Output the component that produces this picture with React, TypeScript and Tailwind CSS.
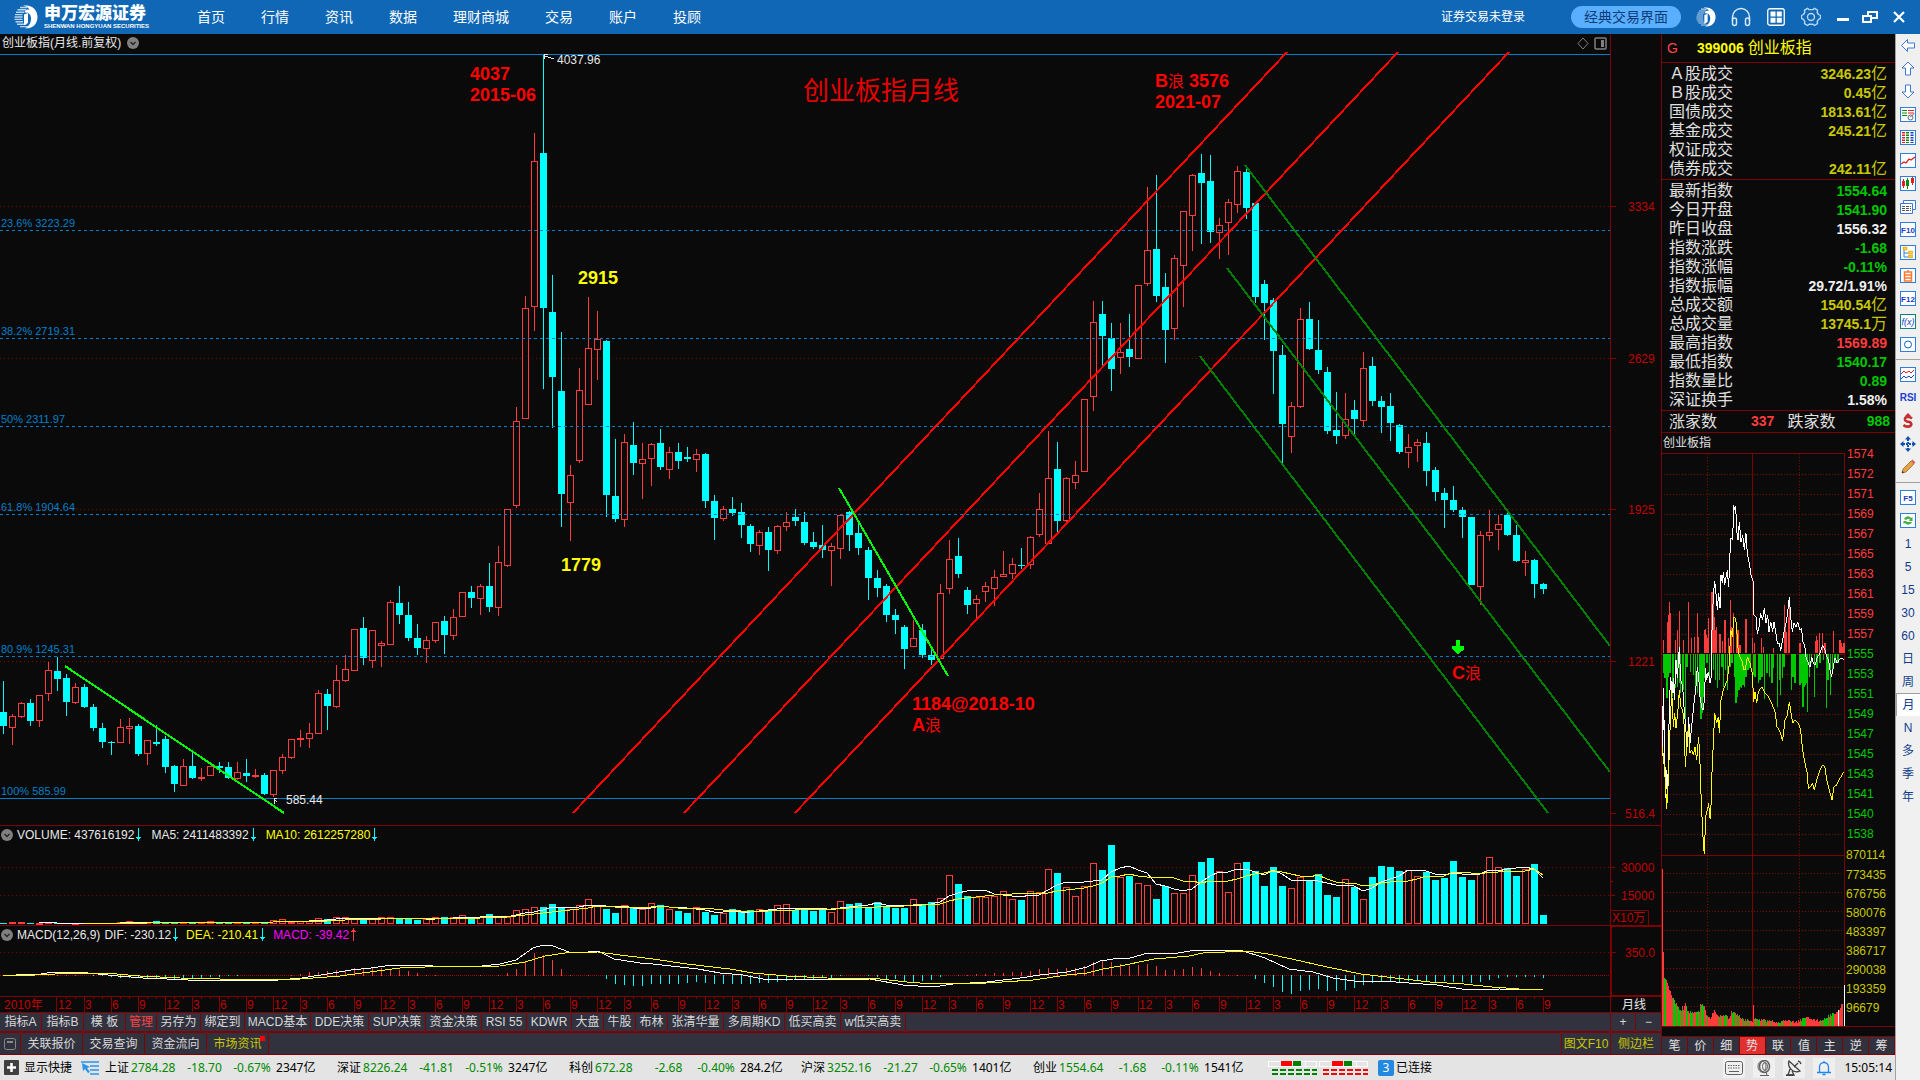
import React from "react";

const BG = "#0a0a0a";
const UP = "#ff3c3c";
const DOWN = "#00ffff";
const GRID = "#800000";
const FIB = "#0080c8";

type Kind = "R" | "C";
type Candle = [Kind, number, number, number, number];

/* kind, high, body top, body bottom, low; one entry per month from June 2010 */
const candles: Candle[] = [
  ["C", 681, 712, 726, 734], ["R", 714, 716, 728, 745], ["R", 702, 703, 717, 718], ["C", 699, 703, 721, 726],
  ["R", 695, 695, 721, 727], ["R", 662, 670, 694, 701], ["C", 657, 671, 679, 691], ["C", 674, 678, 702, 716],
  ["R", 683, 687, 703, 704], ["C", 684, 687, 707, 708], ["C", 704, 707, 728, 731], ["C", 723, 728, 742, 748],
  ["C", 741, 742, 743, 755], ["R", 719, 727, 743, 743], ["R", 718, 726, 729, 744], ["C", 724, 726, 754, 756],
  ["R", 740, 740, 754, 765], ["C", 725, 742, 744, 746], ["C", 736, 739, 767, 773], ["C", 765, 766, 784, 792],
  ["R", 759, 766, 786, 786], ["C", 752, 766, 778, 779], ["R", 768, 777, 779, 781], ["R", 766, 766, 776, 776],
  ["C", 762, 766, 768, 773], ["C", 762, 767, 778, 779], ["R", 762, 772, 779, 780], ["C", 759, 773, 776, 782],
  ["R", 769, 775, 777, 778], ["C", 773, 775, 794, 795], ["R", 770, 770, 795, 797], ["R", 754, 757, 771, 774],
  ["R", 739, 739, 758, 759], ["R", 730, 738, 740, 747], ["R", 723, 733, 739, 748], ["R", 690, 693, 734, 734],
  ["C", 689, 694, 706, 730], ["R", 665, 680, 707, 708], ["R", 655, 669, 681, 682], ["R", 629, 629, 671, 671],
  ["C", 617, 628, 658, 665], ["R", 630, 630, 661, 668], ["R", 641, 643, 646, 667], ["R", 600, 602, 645, 645],
  ["C", 586, 603, 615, 624], ["C", 602, 615, 638, 641], ["C", 624, 638, 648, 655], ["R", 636, 640, 649, 663],
  ["R", 622, 622, 641, 643], ["C", 616, 621, 635, 654], ["R", 609, 617, 636, 640], ["R", 592, 592, 617, 617],
  ["C", 586, 592, 598, 608], ["R", 584, 586, 599, 615], ["C", 563, 586, 607, 612], ["R", 546, 562, 608, 616],
  ["R", 509, 509, 566, 567], ["R", 407, 421, 506, 508], ["R", 296, 308, 419, 419], ["R", 133, 161, 307, 331],
  ["C", 54, 153, 308, 389], ["C", 275, 312, 377, 428], ["C", 332, 391, 494, 527], ["R", 465, 475, 503, 541],
  ["R", 368, 390, 461, 463], ["R", 297, 348, 405, 405], ["R", 311, 339, 350, 380], ["C", 340, 341, 495, 517],
  ["C", 439, 496, 519, 522], ["R", 434, 442, 520, 527], ["C", 422, 445, 463, 475], ["R", 443, 459, 464, 499],
  ["R", 443, 444, 459, 486], ["C", 429, 443, 467, 470], ["R", 447, 452, 470, 479], ["C", 443, 452, 461, 469],
  ["C", 447, 457, 459, 462], ["R", 449, 454, 460, 472], ["C", 453, 454, 501, 508], ["C", 495, 501, 518, 540],
  ["R", 506, 509, 519, 521], ["C", 497, 509, 513, 516], ["C", 503, 512, 525, 538], ["C", 524, 526, 544, 552],
  ["R", 530, 532, 546, 555], ["C", 527, 532, 550, 571], ["R", 525, 526, 551, 554], ["R", 512, 522, 527, 531],
  ["C", 509, 517, 521, 526], ["C", 512, 522, 543, 545], ["C", 532, 542, 547, 549], ["C", 525, 545, 550, 558],
  ["R", 543, 546, 551, 586], ["R", 515, 515, 549, 559], ["C", 511, 512, 535, 551], ["C", 524, 533, 548, 555],
  ["C", 547, 550, 578, 600], ["C", 570, 578, 588, 597], ["C", 584, 586, 615, 622], ["C", 609, 615, 620, 634],
  ["C", 625, 627, 649, 669], ["R", 620, 638, 647, 647], ["C", 624, 630, 655, 658], ["C", 647, 655, 660, 665],
  ["R", 584, 593, 659, 659], ["R", 540, 559, 589, 594], ["C", 538, 556, 574, 578], ["C", 587, 590, 605, 614],
  ["R", 595, 599, 604, 618], ["R", 582, 586, 592, 602], ["R", 570, 577, 589, 606], ["R", 551, 574, 577, 577],
  ["R", 558, 564, 574, 579], ["C", 548, 565, 566, 569], ["R", 536, 537, 565, 569], ["R", 493, 509, 535, 537],
  ["R", 431, 478, 544, 544], ["C", 442, 469, 521, 532], ["R", 477, 478, 521, 523], ["R", 461, 475, 483, 489],
  ["R", 399, 399, 472, 472], ["R", 301, 322, 397, 411], ["C", 301, 314, 336, 366], ["C", 323, 338, 369, 391],
  ["R", 323, 352, 358, 374], ["C", 314, 349, 357, 367], ["R", 285, 285, 359, 359], ["R", 187, 250, 284, 286],
  ["C", 175, 249, 296, 302], ["C", 273, 287, 330, 363], ["R", 255, 258, 329, 340], ["R", 211, 211, 266, 307],
  ["R", 174, 175, 216, 251], ["C", 154, 173, 183, 244], ["C", 155, 181, 232, 243], ["R", 218, 225, 233, 259],
  ["R", 199, 202, 223, 255], ["R", 166, 171, 205, 213], ["C", 168, 172, 208, 219], ["C", 202, 203, 297, 303],
  ["C", 280, 284, 303, 340], ["C", 298, 300, 351, 394], ["C", 345, 355, 424, 463], ["R", 402, 406, 437, 453],
  ["R", 308, 319, 407, 408], ["C", 302, 319, 349, 350], ["C", 320, 350, 370, 374], ["C", 367, 372, 431, 434],
  ["C", 392, 430, 436, 444], ["R", 393, 419, 436, 439], ["C", 400, 410, 419, 434], ["R", 352, 368, 421, 426],
  ["C", 357, 366, 401, 406], ["C", 396, 401, 407, 433], ["C", 393, 406, 423, 441], ["C", 424, 425, 452, 454],
  ["R", 434, 447, 453, 468], ["R", 439, 442, 446, 462], ["C", 432, 443, 471, 486], ["C", 467, 470, 492, 501],
  ["C", 488, 493, 500, 528], ["C", 486, 500, 510, 512], ["C", 507, 510, 517, 538], ["C", 517, 517, 585, 585],
  ["R", 531, 535, 587, 605], ["R", 510, 532, 536, 541], ["R", 515, 524, 530, 550], ["C", 513, 515, 535, 536],
  ["C", 525, 535, 561, 562], ["R", 551, 560, 563, 576], ["C", 559, 560, 584, 598], ["C", 583, 584, 589, 594],
];

const volumes = [
  1, 2, 2, 1, 1, 2, 1, 1, 1, 1, 1, 1, 1, 2, 3, 2, 2, 3, 2, 2, 2, 2, 2, 3, 2, 2, 2, 2, 2, 2, 4, 5, 2, 3, 3, 6, 5, 7, 7, 6,
  6, 5, 7, 7, 5, 6, 4, 5, 7, 7, 7, 9, 6, 7, 10, 7, 7, 14, 15, 17, 17, 20, 16, 15, 19, 25, 18, 15, 11, 19, 16, 15, 21, 19,
  15, 13, 11, 17, 12, 9, 11, 15, 12, 14, 15, 13, 19, 20, 14, 15, 13, 16, 12, 23, 20, 21, 17, 22, 17, 16, 16, 25, 20, 22,
  26, 49, 40, 28, 27, 27, 28, 33, 25, 24, 33, 32, 55, 51, 37, 28, 38, 61, 54, 79, 47, 48, 41, 39, 25, 38, 31, 31, 49, 62,
  66, 53, 32, 61, 62, 53, 38, 57, 38, 36, 47, 44, 50, 29, 27, 45, 37, 25, 47, 58, 57, 53, 54, 48, 52, 44, 46, 63, 47, 44,
  51, 67, 57, 56, 48, 55, 60, 9,
];

const histogram = [
  0, 0, 0, 0, 0, 1, 1, 1, 1, 0, -1, -1, -2, -3, -3, -3, -3, -3, -3, -4, -4, -3, -3, -2, -2, -1, -1, 0, 0, 0, 0, 0, 1, 2, 4,
  4, 5, 6, 6, 8, 7, 8, 8, 7, 6, 5, 3, 1, 1, 0, 0, 0, 0, 1, 0, 1, 3, 7, 14, 23, 21, 16, 7, 1, 0, 1, 0, -4, -9, -10, -11, -11,
  -9, -9, -9, -9, -8, -7, -8, -9, -9, -9, -9, -9, -8, -8, -7, -6, -4, -4, -4, -3, -4, -1, 0, 0, -1, -2, -5, -4, -6, -7, -6,
  -5, -2, 0, 1, 1, 2, 2, 3, 3, 4, 4, 5, 7, 8, 7, 8, 8, 10, 14, 15, 14, 12, 10, 11, 12, 10, 6, 6, 7, 9, 8, 5, 3, 1, 1, 0,
  -4, -8, -12, -17, -19, -16, -15, -14, -16, -16, -15, -13, -10, -8, -7, -7, -7, -6, -5, -6, -7, -6, -7, -7, -8, -7, -5, -3,
  -2, -2, -2, -2, -3,
];

const DIF =
  "16,974 35,975 53,972 78,972 98,974 118,976 143,978 167,979 188,980 278,980 302,978 327,974 351,970 371,968 392,965 420,965 433,966 482,966 500,964 516,960 533,948 543,945 553,946 569,952 588,952 598,951 614,959 640,963 653,964 698,969 720,973 743,975 763,979 793,979 827,980 870,979 903,985 933,987 953,984 987,982 1020,978 1040,975 1067,972 1087,967 1100,961 1120,958 1130,958 1148,953 1172,954 1196,950 1240,950 1265,958 1289,969 1313,972 1333,978 1354,981 1382,981 1409,983 1437,985 1468,990 1499,989 1543,990";
const DEA =
  "3,975 35,975 75,973 105,973 140,976 180,978 220,979 300,979 340,976 370,972 400,968 425,967 500,966 525,962 545,956 565,953 598,952 620,955 653,959 687,964 730,969 753,973 787,976 827,978 880,979 907,982 933,984 987,983 1033,980 1067,975 1087,973 1103,969 1120,966 1154,959 1189,956 1203,953 1247,951 1268,954 1292,959 1327,967 1361,974 1395,978 1430,982 1464,984 1492,987 1519,989 1543,989";

/* left edge of the slot of month i */
const slot = (i: number) => 9 * i + (i >= 96 ? 1 : 0);

function average(n: number) {
  const out: string[] = [];
  for (let i = n - 1; i < volumes.length; i++) {
    let sum = 0;
    for (let k = 0; k < n; k++) sum += volumes[i - k];
    out.push(`${slot(i) + 3},${Math.round(924 - sum / n)}`);
  }
  return out.join(" ");
}

function MainChart() {
  return (
    <svg viewBox="0 52 1661 773" className="block w-full text-[12px]" shapeRendering="crispEdges" role="img" aria-label="创业板指月线">
      {[206, 358, 509, 661].map((y) => (
        <line key={y} x1="0" x2="1610" y1={y + 0.5} y2={y + 0.5} stroke={GRID} strokeDasharray="1 3" />
      ))}
      {candles.map(([k, h, t, b, l], i) => {
        const x = slot(i);
        return k === "C" ? (
          <g key={i} fill={DOWN}>
            <rect x={x + 3} y={h} width="1" height={l - h} />
            <rect x={x} y={t} width="7" height={Math.max(1, b - t)} />
          </g>
        ) : (
          <g key={i} fill={UP}>
            <rect x={x + 3} y={h} width="1" height={l - h} />
            <rect x={x + 0.5} y={t + 0.5} width="6" height={Math.max(1, b - t - 1)} fill={BG} stroke={UP} />
          </g>
        );
      })}
      <g stroke={FIB}>
        <line x1="0" x2="1610" y1="54.5" y2="54.5" />
        {[230, 338, 426, 514, 656].map((y) => (
          <line key={y} x1="0" x2="1610" y1={y + 0.5} y2={y + 0.5} strokeDasharray="3 3" />
        ))}
        <line x1="0" x2="1610" y1="798.5" y2="798.5" />
      </g>
      <g fill={FIB} className="text-[11px]">
        <text x="1" y="227">23.6% 3223.29</text>
        <text x="1" y="335">38.2% 2719.31</text>
        <text x="1" y="423">50% 2311.97</text>
        <text x="1" y="511">61.8% 1904.64</text>
        <text x="1" y="653">80.9% 1245.31</text>
        <text x="1" y="795">100% 585.99</text>
      </g>
      <g strokeWidth="2" fill="none">
        <path stroke="#ff0000" d="M573 813L1287 52M684 813L1398 52M795 813L1509 52" />
        <path stroke="#008000" d="M1245 165L1610 646M1227 268L1610 772M1200 356L1548 813" />
        <path stroke="#00ff00" d="M65 666L284 813M839 488L948 676" />
      </g>
      <path fill="#00ff00" d="M1456 640h4v6h4v3l-2 2h-1l-2 3h-2l-2 -3h-1l-2 -2v-3h4z" />
      <g stroke="#e8e8e8" fill="none">
        <path d="M544.5 59v-4.500h3M545 56l9 3" />
        <path d="M274 804v-5.500h3M274 799l3 3" />
      </g>
      <g fill="#e8e8e8">
        <text x="557" y="64">4037.96</text>
        <text x="286" y="804">585.44</text>
      </g>
      <g className="text-[18px] font-bold" fill="#ff0000">
        <text x="470" y="80">4037</text>
        <text x="470" y="101">2015-06</text>
        <text x="1155" y="87">B<tspan className="text-[16px] font-normal">浪</tspan> 3576</text>
        <text x="1155" y="108">2021-07</text>
        <text x="912" y="710">1184@2018-10</text>
        <text x="912" y="731">A<tspan className="text-[16px] font-normal">浪</tspan></text>
        <text x="1452" y="679">C<tspan className="text-[16px] font-normal">浪</tspan></text>
      </g>
      <g className="text-[18px] font-bold" fill="#ffff00">
        <text x="578" y="284">2915</text>
        <text x="561" y="571">1779</text>
      </g>
      <text x="803" y="100" fill="#e60000" className="text-[26px]">创业板指月线</text>
      <path stroke={GRID} d="M1610.500 52V825M1610 206.500h6M1610 358.500h6M1610 509.500h6M1610 661.500h6M1610 813.500h6" />
      <g fill="#c00000">
        <text x="1628" y="211">3334</text>
        <text x="1628" y="363">2629</text>
        <text x="1628" y="514">1925</text>
        <text x="1628" y="666">1221</text>
        <text x="1625" y="818">516.4</text>
      </g>
    </svg>
  );
}

function VolumeChart() {
  return (
    <svg viewBox="0 843 1661 82" className="block w-full text-[12px]" shapeRendering="crispEdges" role="img" aria-label="VOLUME">
      {[867, 895].map((y) => (
        <line key={y} x1="0" x2="1610" y1={y + 0.5} y2={y + 0.5} stroke={GRID} strokeDasharray="1 3" />
      ))}
      {volumes.map((v, i) =>
        candles[i][0] === "C" ? (
          <rect key={i} x={slot(i)} y={924 - v} width="7" height={v} fill={DOWN} />
        ) : (
          <rect key={i} x={slot(i) + 0.5} y={924 - v + 0.5} width="6" height={Math.max(1, v - 1)} fill={BG} stroke={UP} />
        ),
      )}
      <polyline points={average(5)} fill="none" stroke="#fff" />
      <polyline points={average(10)} fill="none" stroke="#ff0" />
      <path stroke={GRID} fill="none" d="M1610.500 843V925M1610 867.500h5M1610 881.500h3M1610 895.500h5M1610 910.500h38.500V925" />
      <g fill="#c00000">
        <text x="1621" y="872">30000</text>
        <text x="1621" y="900">15000</text>
        <text x="1612" y="922">X10万</text>
      </g>
    </svg>
  );
}

function MacdChart() {
  return (
    <svg viewBox="0 943 1661 53" className="block w-full text-[12px]" shapeRendering="crispEdges" role="img" aria-label="MACD">
      <line x1="0" x2="1610" y1="952.5" y2="952.5" stroke={GRID} strokeDasharray="1 3" />
      <line x1="0" x2="1610" y1="975.5" y2="975.5" stroke="#a00000" strokeDasharray="1 1" />
      {histogram.map((v, i) =>
        v === 0 ? null : (
          <rect key={i} x={slot(i) + 3} y={v > 0 ? 976 - v : 975} width="1" height={Math.abs(v)} fill={v > 0 ? UP : DOWN} />
        ),
      )}
      <polyline points={DIF} fill="none" stroke="#fff" />
      <polyline points={DEA} fill="none" stroke="#ff0" />
      <path stroke={GRID} fill="none" d="M1610.500 943V996M1611.500 943V995.500H1661M1612 952.500h4" />
      <text x="1625" y="957" fill="#c00000">350.0</text>
    </svg>
  );
}

function TimeAxis() {
  const months = candles.map((_, i) => i);
  return (
    <svg viewBox="0 996 1661 16" className="block w-full text-[12px]" shapeRendering="crispEdges" role="img" aria-label="时间轴">
      <path stroke={GRID} d="M0 996.500H1661M1610.500 996V1012" />
      {months.filter((i) => i > 6).map((i) => (
        <line key={i} x1={slot(i) + 3.5} x2={slot(i) + 3.5} y1="996" y2={i % 3 === 0 ? 1012 : 999} stroke={GRID} />
      ))}
      <line x1="56.5" x2="56.5" y1="996" y2="1012" stroke={GRID} />
      <g fill="#c00000">
        <text x="4" y="1009">2010年</text>
        {months.filter((i) => i >= 6 && i % 3 === 0).map((i) => (
          <text key={i} x={slot(i) + 4} y="1009">{((5 + i) % 12) + 1}</text>
        ))}
      </g>
      <text x="1622" y="1009" fill="#e8e8e8">月线</text>
    </svg>
  );
}

const PRICE_LINE =
  "67,978 68,828 72,900 70,775 75,1010 77,1105 80,1020 83,1075 86,950 88,820 92,740 96,790 100,745 103,810 108,690 112,745 118,652 122,750 128,770 132,830 138,905 142,950 146,860 150,940 156,880 162,820 168,770 172,710 176,740 180,800 186,835 190,840 194,800 196,715 200,750 205,725 210,758 214,740 216,600 220,500 224,452 228,490 232,540 236,490 240,535 243,435 247,460 250,425 254,465 258,440 262,420 266,470 270,370 273,325 278,330 281,225 284,240 287,228 290,300 294,330 298,275 303,335 308,315 313,360 318,310 322,370 328,400 333,435 340,455 342,555 348,560 352,612 357,590 362,550 368,570 373,535 378,580 383,555 387,605 392,575 398,605 402,575 407,605 412,640 418,640 422,662 428,630 433,600 440,570 445,530 448,500 452,560 457,605 462,580 468,590 473,575 480,600 485,595 488,635 494,645 498,680 505,700 510,712 515,680 520,700 526,705 532,680 540,670 548,645 555,660 560,680 566,690 570,720 575,740 580,710 585,685 592,700 598,690 604,685 612,688";
const LEAD_LINE =
  "67,950 72,1000 77,1070 80,1138 85,1050 90,900 95,780 100,890 104,850 108,895 113,850 118,780 122,830 128,840 132,880 136,1010 140,950 145,890 150,970 155,960 160,975 165,950 170,990 176,920 180,1000 184,1120 190,1240 193,1272 197,1160 202,1140 206,1120 209,1165 212,1165 215,1050 220,940 224,850 230,880 235,860 238,910 243,810 250,780 256,765 262,750 268,700 272,600 277,620 282,560 287,565 290,600 295,665 300,680 305,690 312,720 316,720 322,680 330,700 337,730 341,815 345,785 350,820 355,785 365,770 375,790 385,800 395,820 405,845 411,890 418,900 428,932 435,870 442,855 448,815 453,850 458,880 465,870 475,880 482,900 488,960 495,1000 502,1030 505,1075 512,1070 518,1060 523,1080 530,1050 540,1020 548,1005 555,1012 560,1050 568,1080 576,1110 582,1070 590,1065 600,1045 612,1025";
const BUY_BARS =
  "70,630 82,575 85,555 88,517 91,550 106,630 112,600 118,543 130,630 145,516 154,625 163,622 172,548 175,620 193,600 196,597 200,615 203,625 206,563 216,485 219,500 222,560 226,600 229,590 240,612 248,632 255,570 265,625 271,510 274,590 280,550 290,600 294,600 300,645 318,568 337,625 343,640 364,625 370,650 400,655 433,525 436,590 440,605 446,560 448,525 480,640 527,632 529,618 532,630 538,608 547,608 555,640 580,603 600,630 604,640 607,650 612,640";
const SELL_BARS =
  "72,730 75,745 80,805 85,740 90,730 97,800 100,790 106,775 112,770 118,760 121,790 127,770 130,780 136,870 140,710 151,725 160,735 166,780 172,790 178,800 182,868 186,850 190,800 193,745 200,700 208,760 220,720 226,750 232,775 238,750 245,710 250,770 256,720 262,780 270,710 275,700 283,740 288,820 292,800 296,780 300,770 304,775 308,765 313,770 318,740 324,720 330,715 340,735 345,740 355,760 360,750 366,740 373,808 380,730 388,740 395,760 400,715 412,832 418,750 421,795 427,745 431,710 454,780 459,740 465,760 480,765 484,760 488,830 492,770 496,765 500,760 502,845 508,740 514,700 523,802 530,715 540,700 550,690 559,835 564,750 571,795 577,730 585,700 594,700";
const pairs = (s: string) => s.split(" ").map((p) => p.split(",").map(Number));

/* minute volume: minute index (one pixel each) and height in pixels, filled in between by interpolation */
const minuteShape: [number, number][] = [
  [0, 157], [1, 74], [2, 48], [4, 46], [5, 43], [8, 35], [10, 30], [12, 26], [16, 19], [19, 16], [20, 20], [21, 16], [23, 24],
  [25, 16], [30, 14], [37, 15], [38, 22], [42, 22], [44, 12], [48, 9], [52, 16], [56, 11], [63, 12], [67, 8], [69, 15], [75, 13],
  [80, 8], [90, 5], [91, 21], [92, 8], [100, 7], [115, 5], [125, 6], [135, 5], [141, 8], [145, 11], [150, 7], [160, 6], [165, 10],
  [170, 13], [175, 15], [178, 19], [180, 24], [181, 24],
];
function minuteHeight(x: number) {
  for (let k = 1; k < minuteShape.length; k++) {
    const [x0, h0] = minuteShape[k - 1];
    const [x1, h1] = minuteShape[k];
    if (x <= x1) return h0 + ((h1 - h0) * (x - x0)) / (x1 - x0);
  }
  return 4;
}
const minutes = Array.from({ length: 181 }, (_, i) => {
  const n = (i * 37 + ((i * i) % 23) * 5) % 17;
  return { x: 1662 + i, h: Math.max(3, Math.round(minuteHeight(i) - (i > 5 ? n % 3 : 0))), up: i < 2 || (i > 3 && i < 11) || (i > 44 && i < 57) || (i > 12 && n < 9) };
});

const upper = [1574, 1572, 1571, 1569, 1567, 1565, 1563, 1561, 1559, 1557, 1555, 1553, 1551, 1549, 1547, 1545, 1543, 1541, 1540, 1538];
const lower = [773435, 676756, 580076, 483397, 386717, 290038, 193359, 96679];

function MinuteChart() {
  return (
    <svg viewBox="1662 453 233 574" className="block w-full overflow-visible text-[12px]" shapeRendering="crispEdges" role="img" aria-label="创业板指分时">
      <g stroke={GRID} strokeDasharray="1 2">
        {upper.slice(1).map((_, i) => (
          <line key={i} x1="1664" x2="1842" y1={474.5 + 20 * i} y2={474.5 + 20 * i} />
        ))}
        {lower.map((_, i) => (
          <line key={i} x1="1664" x2="1842" y1={873.5 + 19 * i} y2={873.5 + 19 * i} />
        ))}
        <path d="M1707.500 454V1026M1799.500 454V1026" />
      </g>
      <path stroke={GRID} fill="none" d="M1662 453.500H1844.500V1026M1662 654.500H1844M1752.500 453V1026M1662 855.500H1844M1662 1026.500H1895" />
      <g transform="translate(1640 430) scale(0.3333)">
        {pairs(BUY_BARS).map(([x, y], i) => (
          <rect key={i} x={x - 2} y={y} width="4" height={669 - y} fill={UP} />
        ))}
        {pairs(SELL_BARS).map(([x, y], i) => (
          <rect key={i} x={x - 2} y="673" width="5" height={y - 673} fill="#00c800" />
        ))}
        <polyline points={PRICE_LINE} fill="none" stroke="#fff" strokeWidth="3" />
        <polyline points={LEAD_LINE} fill="none" stroke="#ff0" strokeWidth="3" />
      </g>
      {minutes.map((m) => (
        <rect key={m.x} x={m.x} y={1026 - m.h} width="1" height={m.h} fill={m.up ? UP : "#00c800"} />
      ))}
      <path stroke="#fff" d="M1838.500 1010V1026M1844.500 985V1026" />
      <g>
        {upper.map((v, i) => (
          <text key={v} x="1847" y={458 + 20 * i} fill={v > 1555 ? UP : "#00c800"}>{v}</text>
        ))}
        <text x="1846" y="859" fill="#c8c800">870114</text>
        {lower.map((v, i) => (
          <text key={v} x="1846" y={879 + 19 * i} fill="#c8c800">{v}</text>
        ))}
      </g>
    </svg>
  );
}

function Swirl({ size }: { size: number }) {
  return (
    <svg width={size} height={size} viewBox="0 0 24 24" aria-hidden="true">
      <path d="M9 0.800C18 -1 23.500 5 23.500 12C23.500 19 18.500 24 11 23.300C15.500 21 17.500 17 17 12.500C16.500 8.500 14 7 10.500 7.500C11 5 13 4 15.500 5C14.500 2.500 12 1.200 9 0.800Z" fill="#fff" />
      <path d="M6 2.500H13M3.500 4.800H12M2 7.200H10M1 9.600H8.500M0.500 12H8.500M0.500 14.400H8.500M1.500 16.800H9M3 19.200H12M6 21.600H14" stroke="#b8d4ee" strokeWidth="1.400" />
      <path d="M10 9.500l4 -1.500v9.500q-1 2 -4 2.500z" fill="#fff" />
    </svg>
  );
}

function Header() {
  return (
    <header className="flex h-[34px] items-center bg-[#0f67b5] text-white">
      <div className="flex w-[197px] items-center gap-1.5 pl-[14px]">
        <Swirl size={24} />
        <div className="flex flex-col">
          <span className="text-[17px] leading-[17px] font-black">申万宏源证券</span>
          <span className="text-[6px] leading-[8px] font-bold whitespace-nowrap">SHENWAN HONGYUAN SECURITIES</span>
        </div>
      </div>
      <nav className="flex flex-1 gap-9 text-[14px]">
        {["首页", "行情", "资讯", "数据", "理财商城", "交易", "账户", "投顾"].map((t) => (
          <a key={t} href="#">{t}</a>
        ))}
      </nav>
      <div className="flex items-center pr-[10px]">
        <span className="text-[12px]">证券交易未登录</span>
        <button className="mr-[14px] ml-[46px] h-[22px] w-[110px] rounded-full bg-[#5aafff] text-[14px] leading-[22px] text-[#0c3c78]">经典交易界面</button>
        <button aria-label="申万宏源" className="flex w-[22px] justify-center"><Swirl size={20} /></button>
        <button aria-label="客服" className="ml-[13px] flex w-[22px] justify-center">
          <svg width="20" height="20" viewBox="0 0 20 20" fill="none" stroke="#d6e8fa" strokeWidth="1.500">
            <path d="M1.500 13.500V10a8.500 8.500 0 0 1 17 0v3.500" />
            <rect x="1.500" y="11" width="4" height="7.500" rx="2" />
            <rect x="14.500" y="11" width="4" height="7.500" rx="2" />
          </svg>
        </button>
        <button aria-label="布局" className="ml-[13px] flex w-[22px] justify-center">
          <svg width="18" height="18" viewBox="0 0 18 18">
            <rect x="0.750" y="0.750" width="16.500" height="16.500" rx="2" fill="none" stroke="#fff" strokeWidth="1.300" />
            <path fill="#fff" d="M3.500 3.500h5v5h-5zM9.800 3.500h5v5h-5zM3.500 9.800h5v5h-5zM9.800 9.800h5v5h-5z" />
          </svg>
        </button>
        <button aria-label="设置" className="ml-[13px] flex w-[22px] justify-center">
          <svg width="20" height="20" viewBox="0 0 20 20" fill="none" stroke="#b9d8f5" strokeWidth="1.400" strokeLinejoin="round">
            <path d="M6.500 1.300L8 2.600h4l1.500-1.300 3 1.800-.3 2.400 1.400 2 1.900 1v2.800l-1.900 1-1.400 2 .3 2.400-3 1.800-1.500-1.300H8l-1.500 1.300-3-1.800.3-2.400-1.400-2-1.900-1V8.500l1.900-1 1.400-2-.3-2.400z" />
            <circle cx="10" cy="10" r="3.500" />
          </svg>
        </button>
        <button aria-label="最小化" className="ml-[9px] flex w-[24px] justify-center">
          <svg width="12" height="12"><rect x="0" y="7" width="12" height="3" fill="#fff" /></svg>
        </button>
        <button aria-label="还原" className="ml-[4px] flex w-[22px] justify-center">
          <svg width="16" height="12" fill="none" stroke="#fff" strokeWidth="2">
            <path d="M6 4V1h9v6h-5" />
            <path d="M1 5h8v6H1z" />
          </svg>
        </button>
        <button aria-label="关闭" className="ml-[7px] flex w-[22px] justify-center">
          <svg width="12" height="12" stroke="#fff" strokeWidth="2.200"><path d="M1 1l10 10M11 1L1 11" /></svg>
        </button>
      </div>
    </header>
  );
}

function Chevron() {
  return (
    <svg width="12" height="12" viewBox="0 0 12 12" aria-hidden="true">
      <circle cx="6" cy="6" r="6" fill="#808080" />
      <path d="M3.500 5l2.500 2.500L8.500 5" fill="none" stroke="#222" strokeWidth="1.300" />
    </svg>
  );
}

function Arrow({ up }: { up?: boolean }) {
  return (
    <svg width="5" height="13" viewBox="0 0 5 13" shapeRendering="crispEdges" className="ml-0.5" aria-hidden="true">
      {up ? <path fill={UP} d="M2 0h1v13h-1zM1 2h3v1h1v1H0V3h1z" /> : <path fill={DOWN} d="M2 0h1v13h-1zM0 9h5v1H4v1H1v-1H0z" />}
    </svg>
  );
}

const tabs: [string, string][] = [
  ["指标A", "w-[42px]"], ["指标B", "w-[42px]"], ["模 板", "w-[42px]"], ["管理", "w-[31px]"], ["另存为", "w-[44px]"],
  ["绑定到", "w-[44px]"], ["MACD基本", "w-[66px]"], ["DDE决策", "w-[58px]"], ["SUP决策", "w-[57px]"], ["资金决策", "w-[56px]"],
  ["RSI 55", "w-[45px]"], ["KDWR", "w-[45px]"], ["大盘", "w-[32px]"], ["牛股", "w-[32px]"], ["布林", "w-[32px]"],
  ["张清华量", "w-[56px]"], ["多周期KD", "w-[61px]"], ["低买高卖", "w-[56px]"], ["w低买高卖", "w-[65px]"],
];

function Charts() {
  return (
    <section className="min-w-0 flex-1 text-[12px]">
      <div className="flex h-[18px] items-center text-[#e8e8e8]">
        <h1 className="flex flex-1 items-center gap-1.5 pl-0.5">创业板指(月线.前复权) <Chevron /></h1>
        <svg width="34" height="14" viewBox="0 0 34 14" fill="none" stroke="#808080" className="mr-0.5" aria-hidden="true">
          <path d="M9 2l5 5.500l-5 5.500l-5 -5.500z" />
          <rect x="21" y="2" width="11" height="11" rx="1" strokeWidth="1.500" />
          <path d="M28.500 4v7" strokeWidth="3" />
        </svg>
        <span className="h-full w-[51px] border-l border-[#800000]" />
      </div>
      <MainChart />
      <div className="border-t border-[#800000]">
        <div className="flex h-[17px]">
          <div className="flex flex-1 items-center pl-px text-[#e8e8e8]">
            <span className="mr-1"><Chevron /></span>
            VOLUME: 437616192<Arrow />
            <span className="ml-2.5">MA5: 2411483392</span><Arrow />
            <span className="ml-2.5 text-[#ffff00]">MA10: 2612257280</span><Arrow />
          </div>
          <span className="w-[51px] border-l border-[#800000]" />
        </div>
        <VolumeChart />
      </div>
      <div className="border-t border-[#800000]">
        <div className="flex h-[17px]">
          <div className="flex flex-1 items-center pl-px text-[#e8e8e8]">
            <span className="mr-1"><Chevron /></span>
            MACD(12,26,9)
            <span className="ml-1">DIF: -230.12</span><Arrow />
            <span className="ml-2 text-[#ffff00]">DEA: -210.41</span><Arrow />
            <span className="ml-2 text-[#ff00ff]">MACD: -39.42</span><Arrow up />
          </div>
          <span className="w-[51px] border-t border-l-2 border-[#800000]" />
        </div>
        <MacdChart />
      </div>
      <TimeAxis />
      <div className="flex h-[21px] border-t border-b-2 border-[#800000] bg-[#32323f] text-[#d8d8d8]">
        {tabs.map(([t, w]) => (
          <button key={t} className={`${w} shrink-0 border-r border-[#800000] whitespace-nowrap ${t === "管理" ? "text-[#ff4040]" : ""}`}>{t}</button>
        ))}
        <span className="flex-1" />
        <button className="w-[25px] border-l border-[#800000] leading-4">+</button>
        <button className="w-[26px] border-l border-[#800000] leading-4">−</button>
      </div>
      <div className="flex h-[22px] border-b border-[#800000] bg-[#32323f] text-[#d8d8d8]">
        <button aria-label="折叠" className="flex w-[21px] items-center justify-center border-r border-[#800000]">
          <svg width="12" height="12" viewBox="0 0 12 12" fill="none" stroke="#888"><rect x="0.500" y="0.500" width="11" height="11" rx="2" /><path d="M3 4h6" strokeWidth="2" /></svg>
        </button>
        {["关联报价", "交易查询", "资金流向"].map((t) => (
          <button key={t} className="w-[62px] border-r border-[#800000]">{t}</button>
        ))}
        <button className="relative w-[62px] border-r border-[#800000] text-[#c8c800]">
          市场资讯
          <span className="absolute top-[3px] right-[3px] size-[5px] bg-[#ff0000]" />
        </button>
        <span className="flex-1" />
        <button className="w-[49px] border-l border-[#800000] text-[#c8c800]">图文F10</button>
        <button className="w-[51px] border-l border-[#800000] text-[#c8c800]">侧边栏</button>
      </div>
    </section>
  );
}

type Quote = [string, string, string, string];
const Y = "text-[#c8c800]";
const G = "text-[#00c800]";
const W = "text-[#f0f0f0]";
const R = "text-[#ff3c3c]";
const turnover: Quote[] = [
  ["Ａ股成交", "3246.23", "亿", Y], ["Ｂ股成交", "0.45", "亿", Y], ["国债成交", "1813.61", "亿", Y],
  ["基金成交", "245.21", "亿", Y], ["权证成交", "", "", Y], ["债券成交", "242.11", "亿", Y],
];
const indexRows: Quote[] = [
  ["最新指数", "1554.64", "", G], ["今日开盘", "1541.90", "", G], ["昨日收盘", "1556.32", "", W], ["指数涨跌", "-1.68", "", G],
  ["指数涨幅", "-0.11%", "", G], ["指数振幅", "29.72/1.91%", "", W], ["总成交额", "1540.54", "亿", Y], ["总成交量", "13745.1", "万", Y],
  ["最高指数", "1569.89", "", R], ["最低指数", "1540.17", "", G], ["指数量比", "0.89", "", G], ["深证换手", "1.58%", "", W],
];

function Rows({ rows }: { rows: Quote[] }) {
  return (
    <table className="w-full">
      <tbody>
        {rows.map(([k, v, unit, c]) => (
          <tr key={k} className="h-[19px] leading-4">
            <th className="pl-[7px] text-left text-[16px] font-normal text-[#e0e0e0]">{k}</th>
            <td className={`pr-[8px] text-right text-[14px] font-bold ${c}`}>{v}<span className="text-[16px] font-normal">{unit}</span></td>
          </tr>
        ))}
      </tbody>
    </table>
  );
}

function Panel() {
  return (
    <aside className="flex w-[235px] shrink-0 flex-col border-r border-l border-r-[#a0a0a0] border-l-[#800000]">
      <h2 className="flex h-[28px] items-center text-[14px] text-[#ffff00]">
        <span className="w-[35px] pl-[5px] text-[#ff4646]">G</span>
        <span className="font-bold">399006</span>
        <span className="ml-1 text-[16px]">创业板指</span>
      </h2>
      <div className="border-t border-[#800000] pt-px pb-px">
        <Rows rows={turnover} />
      </div>
      <div className="border-t border-[#800000] pt-px pb-px">
        <Rows rows={indexRows} />
      </div>
      <div className="flex h-[22px] items-center border-t border-[#800000] pr-[5px] pl-[7px] text-[16px] text-[#e0e0e0]">
        <span>涨家数</span>
        <b className="ml-[34px] text-[14px] text-[#ff3c3c]">337</b>
        <span className="ml-[13px]">跌家数</span>
        <b className="flex-1 text-right text-[14px] text-[#00c800]">988</b>
      </div>
      <h3 className="h-[21px] border-t border-[#800000] pl-px text-[12px] leading-5 text-[#e0e0e0]">创业板指</h3>
      <MinuteChart />
      <div className="mt-auto flex h-[19px] border-y border-[#800000] bg-[#32323f] text-[12px] text-[#e0e0e0]">
        {["笔", "价", "细", "势", "联", "值", "主", "逆", "筹"].map((t) => (
          <button key={t} className={`flex-1 border-r border-[#800000] leading-4 ${t === "势" ? "bg-[#e03030]" : ""}`}>{t}</button>
        ))}
      </div>
    </aside>
  );
}

const indices = [
  ["上证", "2784.28", "-18.70", "-0.67%", "2347亿"],
  ["深证", "8226.24", "-41.81", "-0.51%", "3247亿"],
  ["科创", "672.28", "-2.68", "-0.40%", "284.2亿"],
  ["沪深", "3252.16", "-21.27", "-0.65%", "1401亿"],
  ["创业", "1554.64", "-1.68", "-0.11%", "1541亿"],
];

function Meter({ c }: { c: string }) {
  return (
    <svg width="50" height="15" viewBox="0 0 50 15" shapeRendering="crispEdges" aria-hidden="true">
      <rect x="0.500" y="1.500" width="48" height="5" fill="#e4e4e4" stroke="#fff" />
      <path d="M37.500 1v6" stroke="#fff" />
      <rect x="13" y="1" width="11" height="5" fill="#f00" />
      <rect x="25" y="1" width="8" height="5" fill="#008000" />
      <path d="M4 10h45M4 13.500h45" stroke={c} strokeWidth="2" strokeDasharray="6 2" />
    </svg>
  );
}

function StatusBar() {
  return (
    <footer className="flex h-[25px] items-center border-r border-[#a0a0a0] bg-[#e4e4e4] pr-[3px] text-[12px] text-black [font-family:'Noto_Sans','Noto_Sans_CJK_SC',sans-serif]">
      <button className="flex items-center gap-[5px] pl-[4px]">
        <svg width="15" height="15" aria-hidden="true"><rect width="15" height="15" rx="1" fill="#404040" /><path d="M7.500 3v9M3 7.500h9" stroke="#fff" strokeWidth="2.500" /></svg>
        显示快捷
      </button>
      <button aria-label="列表" className="ml-[9px] w-[24px]">
        <svg width="18" height="14" viewBox="0 0 18 14" aria-hidden="true">
          <path d="M0 1h18M9 5h9M9 9h9M9 13h9" stroke="#2a94e8" strokeWidth="1.600" />
          <path d="M1 2l8 4-3 1 3 4-2 1-3-4-2 2z" fill="#2a94e8" />
        </svg>
      </button>
      {indices.map(([n, v, d, p, m]) => (
        <div key={n} className="flex w-[232px]">
          <span className="w-[26px]">{n}</span>
          <span className="w-[50px] text-[#008a00]">{v}</span>
          <span className="w-[47px] text-center text-[#008a00]">{d}</span>
          <span className="w-[48px] text-center text-[#008a00]">{p}</span>
          <span>{m}</span>
        </div>
      ))}
      <span className="ml-[3px] flex gap-px"><Meter c="#008000" /><Meter c="#f00" /></span>
      <span className="ml-[9px] flex size-4 items-center justify-center rounded-xs bg-[#2288e0] text-white">3</span>
      <span className="ml-0.5 flex-1">已连接</span>
      <div className="flex gap-2 text-[#606060]">
        <button aria-label="键盘" className="flex h-5 w-[22px] items-center justify-center bg-[#efefef]">
          <svg width="18" height="14" viewBox="0 0 18 14" fill="none" stroke="currentColor"><rect x="0.500" y="0.500" width="17" height="13" rx="2" /><path d="M3 4.500h12M3 7h12" strokeDasharray="1.500 1" /><path d="M4 10.500h10" /></svg>
        </button>
        <button aria-label="语音" className="flex h-5 w-[22px] items-center justify-center bg-[#efefef]">
          <svg width="16" height="16" viewBox="0 0 16 16" fill="none" stroke="currentColor"><ellipse cx="8.500" cy="6.500" rx="5" ry="6" strokeWidth="1.500" /><ellipse cx="9" cy="6.500" rx="2.500" ry="4" /><ellipse cx="6" cy="6.500" rx="4" ry="5.500" /><path d="M4 15.500h9M10 12l1 3" /></svg>
        </button>
        <button aria-label="信号" className="flex h-5 w-[22px] items-center justify-center bg-[#efefef]">
          <svg width="16" height="16" viewBox="0 0 16 16" fill="none" stroke="#404040" strokeWidth="1.300"><path d="M3 1c-2 6 4 13 11 10zM8 7l4-4M4 9l-2 6h6l-2-4M12 1a4 4 0 0 1 3 3" /><path d="M0 15.300h8" strokeWidth="2" /></svg>
        </button>
        <button aria-label="提醒" className="flex h-5 w-[22px] items-center justify-center bg-[#efefef]">
          <svg width="16" height="16" viewBox="0 0 16 16" fill="none" stroke="#1e88f0" strokeWidth="1.300"><path d="M8 1v1.500M3.500 12V7a4.500 4.500 0 0 1 9 0v5M1 12.500h14M6.500 14.500h3" /></svg>
        </button>
      </div>
      <time className="ml-[9px]">15:05:14</time>
    </footer>
  );
}

function Framed({ children, stroke = "#2f7fe0" }: { children: React.ReactNode; stroke?: string }) {
  return (
    <svg width="16" height="16" viewBox="0 0 16 16" aria-hidden="true">
      <rect x="0.500" y="0.500" width="15" height="14" fill="#fff" stroke={stroke} />
      {children}
    </svg>
  );
}
const FText = ({ t, c = "#1a3cc0" }: { t: string; c?: string }) => (
  <text x="8" y="11" textAnchor="middle" fill={c} className="text-[8px] font-bold">{t}</text>
);
const arrowPath = "M1 7.500L7 1.500V5H14V10H7V13.500Z";
const BlockArrow = ({ turn }: { turn: number }) => (
  <svg width="16" height="15" viewBox="0 0 15 15" aria-hidden="true">
    <path d={arrowPath} fill="#fff" stroke="#3c78d8" transform={`rotate(${turn} 7.500 7.500)`} />
  </svg>
);

const tools: [string, React.ReactNode][] = [
  ["后退", <BlockArrow turn={0} />],
  ["上翻", <BlockArrow turn={90} />],
  ["下翻", <BlockArrow turn={270} />],
  ["报价设置", <Framed><path d="M2 3.500h5M2 6h5M2 8.500h5" stroke="#0a8a0a" /><path d="M8 3.500h6M8 6h6" stroke="#e02020" /><circle cx="10.500" cy="10.500" r="2.500" fill="none" stroke="#666" /><path d="M10 10.500l4-4" stroke="#666" /></Framed>],
  ["行情列表", <Framed><g strokeWidth="3" strokeDasharray="1.500 1"><path d="M3.500 2v11" stroke="#e02020" /><path d="M7.500 2v11" stroke="#0a8a0a" /><path d="M12 2v11" stroke="#1a3cc0" /></g></Framed>],
  ["分时", <Framed><path d="M1 11l3-2 2 1 3-4 2 1 4-3" fill="none" stroke="#e02020" strokeWidth="1.300" /></Framed>],
  ["K线", <Framed><path d="M3.500 3v9M12.500 1v8" stroke="#e02020" /><path d="M7.500 2v11" stroke="#0a8a0a" /><path d="M2 5h3v5H2zM11 2h3v5h-3z" fill="#e02020" /><path d="M6 4h3v6H6z" fill="#0a8a0a" /></Framed>],
  ["多窗口", <svg width="16" height="14" viewBox="0 0 16 14"><path d="M3.500 3.500v-3h12v9h-3" fill="#fff" stroke="#3c78d8" /><path d="M0.500 3.500h12v10h-12z" fill="#fff" stroke="#3c78d8" /><path d="M2 6.500h9M2 8.500h9M2 10.500h9" stroke="#555" strokeDasharray="3 1" /></svg>],
  ["F10", <Framed><FText t="F10" /></Framed>],
  ["板块树", <Framed><path d="M4 5v7h4M4 8h4" stroke="#2f7fe0" fill="none" /><path d="M3 2h4v3H3zM8.500 6h4v3h-4zM8.500 10h4v3h-4z" fill="#ffcc33" stroke="#c89010" strokeWidth="0.500" /></Framed>],
  ["自选", <Framed><path d="M4.500 4h7v9h-7zM4.500 7h7M4.500 10h7M8 2v2" stroke="#ff7830" strokeWidth="1.500" fill="none" /></Framed>],
  ["F12", <Framed><FText t="F12" /></Framed>],
  ["公式", <Framed stroke="#108080"><text x="8" y="11" textAnchor="middle" fill="#1a3cc0" className="text-[9px] italic">f(x)</text></Framed>],
  ["周期", <Framed><circle cx="8" cy="7.500" r="3.500" fill="none" stroke="#1060c0" /></Framed>],
];
const drawing: [string, React.ReactNode][] = [
  ["叠加", <Framed><path d="M1 7l3-3 2 2 3-2 2 2 3-3" fill="none" stroke="#e02020" /><path d="M1 12l3-3 2 2 3-2 2 2 3-3" fill="none" stroke="#1a3cc0" /></Framed>],
  ["RSI", <span className="text-[10px] font-bold text-[#2040d0]">RSI</span>],
  ["资金", <svg width="14" height="16" viewBox="0 0 14 16"><path d="M7 0l3.500 3.500H3.500z" fill="#c03030" /><path d="M11 5.500Q9 3.800 6.500 4Q3.500 4.500 4 6.800Q4.500 8.300 7.500 8.800Q10.500 9.500 10.300 11.500Q9.500 13.800 6.500 13.600Q4 13.500 2.500 12" fill="none" stroke="#c03030" strokeWidth="2.600" /></svg>],
  ["移动", <svg width="16" height="16" viewBox="0 0 16 16"><path d="M8 0l3 3.500H5zM8 16l3-3.500H5zM0 8l3.500-3v6zM16 8l-3.500-3v6z" fill="#1050b0" /><path d="M8 3v10M3 8h10" stroke="#1050b0" strokeWidth="2" strokeDasharray="2 1" /></svg>],
  ["画线", <svg width="15" height="15" viewBox="0 0 15 15"><path d="M1 14l1-4 8-8 3 3-8 8z" fill="#e8a040" stroke="#806030" strokeWidth="0.700" /><path d="M10 2l1.500-1.500L14.500 3.500 13 5z" fill="#e06060" /><path d="M1 14l.5-2 1.500 1.500z" fill="#222" /></svg>],
];
const periods: [string, React.ReactNode][] = [
  ["F5", <Framed><FText t="F5" /></Framed>],
  ["刷新", <Framed><path d="M4 6a4 4 0 0 1 7-1l1.500-1v4H9l1-1.500A3 3 0 0 0 6 7zM12 9a4 4 0 0 1-7 1l-1.500 1V8H7L6 9z" fill="#40b040" /></Framed>],
  ...["1", "5", "15", "30", "60", "日", "周", "月", "N", "多", "季", "年"].map((t): [string, React.ReactNode] => [t, <span>{t}</span>]),
];

function Toolbar() {
  const group = (items: [string, React.ReactNode][]) =>
    items.map(([name, icon]) => (
      <button
        key={name}
        aria-label={name}
        className={`flex h-[23px] w-full items-center justify-center ${name === "月" ? "border-t border-l border-[#a0a0a0] bg-white" : ""}`}
      >
        {icon}
      </button>
    ));
  return (
    <aside className="w-[24px] shrink-0 bg-[#f0f0f0] text-[12px] text-[#103c8c]">
      {group(tools)}
      <hr className="my-[3px] border-[#a0a0a0]" />
      {group(drawing)}
      <hr className="mt-[4px] mb-[3px] border-[#a0a0a0]" />
      {group(periods)}
    </aside>
  );
}

export default function App() {
  return (
    <div className="flex min-h-screen flex-col bg-[#0a0a0a] [font-family:'Liberation_Sans','Noto_Sans_CJK_SC',sans-serif]">
      <Header />
      <div className="flex flex-1">
        <div className="flex min-w-0 flex-1 flex-col">
          <main className="flex flex-1">
            <Charts />
            <Panel />
          </main>
          <StatusBar />
        </div>
        <Toolbar />
      </div>
    </div>
  );
}
